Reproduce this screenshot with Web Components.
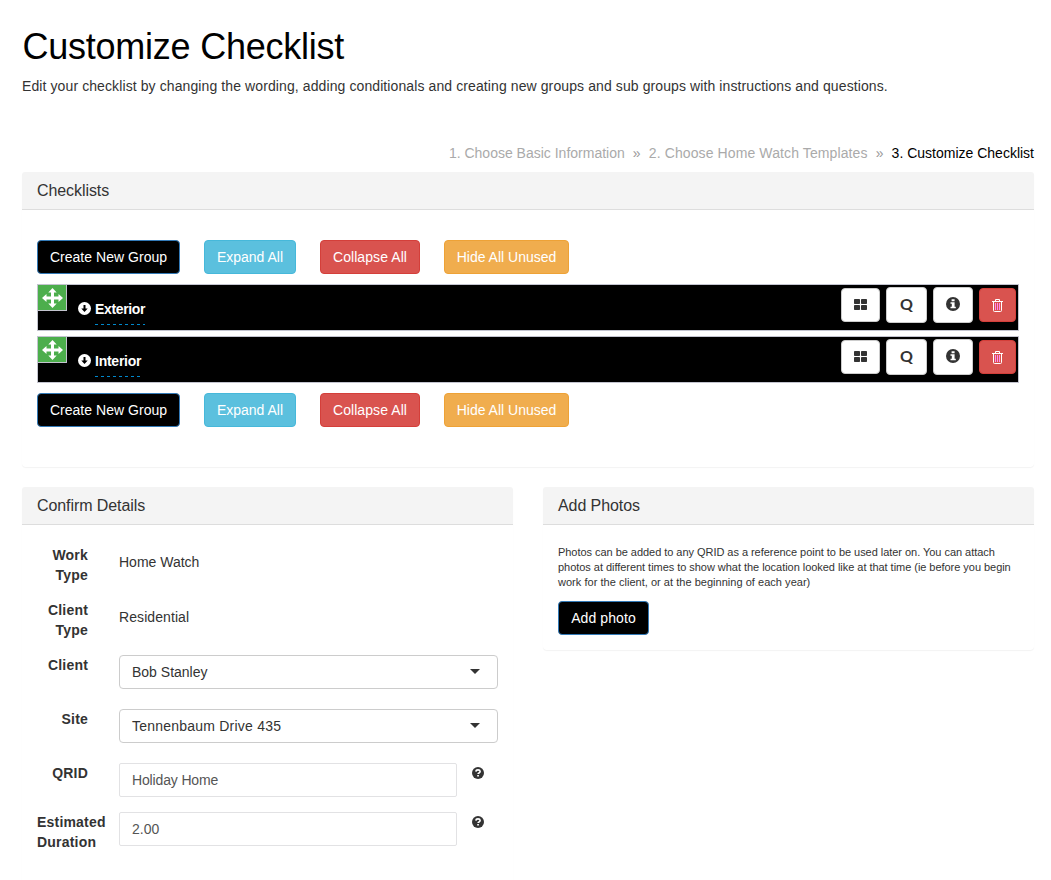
<!DOCTYPE html>
<html lang="en">
<head>
<meta charset="utf-8">
<title>Customize Checklist</title>
<style>
html,body{margin:0;background:#fff}
body{font:14px/20px "Liberation Sans",Arial,sans-serif;color:#333;height:880px;overflow:hidden}
</style>
</head>
<body>
<checklist-page></checklist-page>
<script>
function define(name, html) {
  customElements.define(name, class extends HTMLElement {
    constructor() {
      super();
      const t = document.createElement('template');
      t.innerHTML = html;
      this.attachShadow({mode: 'open'}).append(t.content.cloneNode(true));
    }
  });
}

const ICONS = {
  move: '<svg width="21" height="20" viewBox="0 0 21 20"><path fill="#fff" d="M10.500 0l4.200 4.500H12V8.500h4.500V6L21 10l-4.500 4v-2.500H12v4h2.700L10.500 20l-4.200-4.500H9v-4H4.500V14L0 10l4.500-4v2.500H9v-4H6.300z"/></svg>',
  down: '<svg width="13" height="13" viewBox="0 0 13 13"><circle cx="6.500" cy="6.500" r="6.500" fill="#fff"/><path d="M5.500 3h2v3.500h2.200L6.500 10 3.300 6.500h2.200z" fill="#000"/></svg>',
  grid: '<svg width="13" height="11" viewBox="0 0 13 11"><g fill="#333"><rect width="6" height="5" rx=".7"/><rect x="7" width="6" height="5" rx=".7"/><rect y="6" width="6" height="5" rx=".7"/><rect x="7" y="6" width="6" height="5" rx=".7"/></g></svg>',
  info: '<svg width="14" height="14" viewBox="0 0 14 14"><circle cx="7" cy="7" r="7" fill="#333"/><path d="M5.600 2.200h3v2h-3zM4.500 5.300h4.100v4.500h1.200v1.500H4.500V9.800h1.300v-3H4.500z" fill="#fff"/></svg>',
  trash: '<svg width="11" height="13" viewBox="0 0 11 13"><path d="M3.500 2V.5h4V2M0 2.500h11M1.500 3v8.500q0 1 1 1h6q1 0 1-1V3" fill="none" stroke="#fff"/><path d="M3.500 4v7M5.500 4v7M7.500 4v7" stroke="#ff8cf0"/></svg>',
  help: '<svg width="12" height="12" viewBox="0 0 12 12"><circle cx="6" cy="6" r="6" fill="#333"/><path d="M3.900 4.600Q4 2.900 6 2.900t2.100 1.500Q8.100 5.400 7 5.900q-.9.400-.9 1.200" fill="none" stroke="#fff" stroke-width="1.600"/><path d="M5.200 8h1.700v1.600H5.200z" fill="#fff"/></svg>'
};
customElements.define('ui-icon', class extends HTMLElement {
  constructor() {
    super();
    this.attachShadow({mode: 'open'});
  }
  connectedCallback() {
    this.shadowRoot.innerHTML = '<style>:host{display:inline-block;flex:none;line-height:0}svg{display:block}</style>' + ICONS[this.getAttribute('name')];
  }
});

define('ui-button', `<style>
:host{display:flex;box-sizing:border-box;height:34px;border:1px solid #337ab7;border-radius:4px;background:#000;color:#fff;align-items:center;justify-content:center;white-space:nowrap}
:host([kind=info]){background:#5bc0de;border-color:#46b8da}
:host([kind=danger]){background:#d9534f;border-color:#d43f3a}
:host([kind=warning]){background:#f0ad4e;border-color:#eea236}
:host([kind=plain]){background:#fff;border-color:#ccc;color:#333}
</style><slot></slot>`);

define('checklist-actions', `<style>
:host{display:flex;gap:24px}
</style>
<ui-button style="width:143px;letter-spacing:.03px">Create New Group</ui-button>
<ui-button kind="info" style="width:92px">Expand All</ui-button>
<ui-button kind="danger" style="width:100px;letter-spacing:.08px">Collapse All</ui-button>
<ui-button kind="warning" style="width:125px">Hide All Unused</ui-button>`);

define('checklist-group', `<style>
:host{display:flex;box-sizing:border-box;height:47px;border:1px solid #c3c4cf;background:#000;color:#fff}
.handle{box-sizing:border-box;width:29px;height:26px;background:#4cae4c;border:solid #c3c4cf;border-width:0 1px 1px 0;display:flex;align-items:center;justify-content:center}
ui-icon.arrow{margin:17px 4px 0 11px}
.name{font-weight:bold;height:26px;padding-top:14px}
.name span{display:block;height:26px;line-height:20px;background:repeating-linear-gradient(90deg,#08c 0 3px,transparent 3px 6px) 0 100%/100% 1px no-repeat}
.tools{margin-left:auto;display:flex;gap:6px;padding:2px 2px 0 0;align-items:center;height:36px}
.tools ui-icon{position:relative;top:-1px}
.q{font:bold 16px/20px Lato,sans-serif;margin-top:-2px}
</style>
<div class="handle"><ui-icon name="move"></ui-icon></div>
<ui-icon class="arrow" name="down"></ui-icon>
<div class="name"><span><slot></slot></span></div>
<div class="tools">
<ui-button kind="plain" style="width:39px"><ui-icon name="grid"></ui-icon></ui-button>
<ui-button kind="plain" style="width:41px;height:36px"><span class="q">Q</span></ui-button>
<ui-button kind="plain" style="width:40px;height:36px"><ui-icon name="info"></ui-icon></ui-button>
<ui-button kind="danger" style="width:37px"><ui-icon name="trash" style="top:0"></ui-icon></ui-button>
</div>`);

define('ui-panel', `<style>
:host{display:block;box-sizing:border-box;border-radius:4px;box-shadow:0 1px 1px rgba(0,0,0,.05);background:#fff}
header{box-sizing:border-box;height:38px;border-bottom:1px solid #ddd;border-radius:3px 3px 0 0;background:#f4f4f4;padding:9px 15px;font-size:16px;line-height:19px;letter-spacing:-.08px}
</style><header><slot name="title"></slot></header><slot></slot>`);

define('form-row', `<style>
:host{display:grid;grid-template-columns:51px 1fr;column-gap:31px}
.l{font-weight:bold;text-align:right;letter-spacing:.2px}
:host([wide]) .l{text-align:left;white-space:nowrap}
.v{display:flex}
</style><div class="l"><slot name="label"></slot></div><div class="v"><slot></slot></div>`);

define('ui-select', `<style>
:host{display:flex;box-sizing:border-box;width:379px;height:34px;border:1px solid #ccc;border-radius:4px;padding:0 17px 0 12px;align-items:center;justify-content:space-between;background:#fff}
i{border:5px solid transparent;border-top-color:#333;border-bottom:0;margin-top:-1px}
</style><span><slot></slot></span><i></i>`);

define('ui-input', `<style>
:host{display:flex;box-sizing:border-box;width:338px;height:34px;border:1px solid #e2e2e4;border-radius:2px;padding:0 12px;align-items:center;color:#555;background:#fff}
</style><slot></slot>`);

define('checklist-page', `<style>
:host{display:block;box-sizing:border-box;width:1051px;padding:27px 17px 0 22px}
h1{margin:0;font-size:36px;line-height:40px;font-weight:400;color:#000;letter-spacing:-.24px;text-indent:.5px}
p{margin:0}
.lead{margin-top:9px;letter-spacing:.1px}
nav{display:flex;justify-content:flex-end;margin:47px 0 9px;color:#aaa;white-space:pre}
nav b{font-weight:400;width:24px;text-align:center;color:#999}
nav .on{color:#000}
.lists{height:295px}
.body{padding:30px 15px 0}
.lists .body{display:grid;row-gap:10px}
.groups{display:grid;row-gap:5px}
.cols{display:grid;grid-template-columns:491px 491px;gap:30px;margin-top:20px;align-items:start}
.form{padding:20px 15px 0;display:grid;grid-template-rows:55px 55px 54px 54px 49px 50px;height:371px;box-sizing:border-box}
.off{margin-top:7px}
form-row ui-icon{margin:4px 0 0 15px}
.photo{padding:20px 15px 15px;font-size:11px;line-height:15px}
.photo p{white-space:nowrap}
.photo ui-button{margin-top:11px;width:91px;font-size:14px;letter-spacing:.1px}
</style>
<h1>Customize Checklist</h1>
<p class="lead">Edit your checklist by changing the wording, adding conditionals and creating new groups and sub groups with instructions and questions.</p>
<nav><span>1. Choose Basic Information</span><b>»</b><span style="letter-spacing:.11px">2. Choose Home Watch Templates</span><b>»</b><span class="on">3. Customize Checklist</span></nav>
<ui-panel class="lists"><span slot="title">Checklists</span>
<div class="body">
<checklist-actions></checklist-actions>
<div class="groups"><checklist-group><span style="letter-spacing:-.35px">Exterior</span></checklist-group><checklist-group><span style="letter-spacing:-.25px">Interior</span></checklist-group></div>
<checklist-actions></checklist-actions>
</div></ui-panel>
<div class="cols">
<ui-panel><span slot="title">Confirm Details</span>
<div class="form">
<form-row><span slot="label">Work<br>Type</span><span class="off">Home Watch</span></form-row>
<form-row><span slot="label">Client<br>Type</span><span class="off" style="letter-spacing:.08px">Residential</span></form-row>
<form-row><span slot="label">Client</span><ui-select>Bob Stanley</ui-select></form-row>
<form-row><span slot="label">Site</span><ui-select style="letter-spacing:.22px">Tennenbaum Drive 435</ui-select></form-row>
<form-row><span slot="label">QRID</span><ui-input style="letter-spacing:-.15px">Holiday Home</ui-input><ui-icon name="help"></ui-icon></form-row>
<form-row wide><span slot="label">Estimated<br>Duration</span><ui-input>2.00</ui-input><ui-icon name="help"></ui-icon></form-row>
</div></ui-panel>
<ui-panel><span slot="title">Add Photos</span>
<div class="photo"><p><span style="letter-spacing:-.04px">Photos can be added to any QRID as a reference point to be used later on. You can attach<br>photos at different times to show what the location looked like at that time (ie before you begin</span><br><span style="letter-spacing:.03px">work for the client, or at the beginning of each year)</span></p>
<ui-button>Add photo</ui-button></div></ui-panel>
</div>`);
</script>
</body>
</html>
